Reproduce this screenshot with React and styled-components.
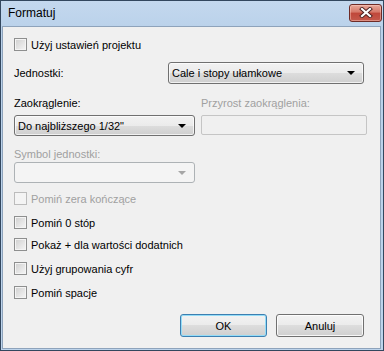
import React from 'react';
import styled, { createGlobalStyle, css } from 'styled-components';

const GlobalStyle = createGlobalStyle`
  html, body {
    margin: 0;
    padding: 0;
    background: #ffffff;
  }
  body {
    font-family: "Liberation Sans", Arial, sans-serif;
    font-size: 11px;
  }
`;

const Window = styled.div`
  box-sizing: border-box;
  width: 384px;
  height: 351px;
  display: flex;
  flex-direction: column;
  border: 1px solid #33475e;
  padding: 0 2px 1px 1px;
  background: linear-gradient(#c4d8ee, #b9d1ea 30px, #bdd4ec);
`;

const TitleBar = styled.div`
  height: 25px;
  display: flex;
  align-items: center;
  justify-content: space-between;
  padding-left: 6px;
  flex-shrink: 0;
`;

const Title = styled.span`
  font-size: 12px;
  color: #000;
  margin-top: -2px;
`;

const CloseButton = styled.div`
  box-sizing: border-box;
  width: 33px;
  height: 18px;
  margin-top: -2px;
  margin-right: -1px;
  border: 1px solid #6e2b26;
  border-radius: 3px;
  background: linear-gradient(#e7a89a 0%, #d57768 45%, #c0473a 50%, #c4594c 100%);
  box-shadow: inset 0 0 0 1px rgba(255, 210, 200, 0.45);
  display: flex;
  align-items: center;
  justify-content: center;
`;

const Content = styled.div`
  flex: 1;
  border: 1px solid #8ea3bb;
  background: #f0f0f0;
  padding: 11px 16px 11px 11px;
  display: flex;
  flex-direction: column;
`;

const CheckRow = styled.label`
  display: flex;
  align-items: center;
  height: 13px;
  gap: 4px;
  margin-top: ${(p) => p.$top || 0}px;
  color: ${(p) => (p.$disabled ? '#a0a0a0' : '#000')};
`;

const Box = styled.span`
  box-sizing: border-box;
  width: 13px;
  height: 13px;
  border: 1px solid ${(p) => (p.$disabled ? '#bcbcbc' : '#8e8f8f')};
  background: ${(p) =>
    p.$disabled
      ? '#f4f4f4'
      : 'linear-gradient(135deg, #cfcfcf, #f6f6f6)'};
  box-shadow: inset 0 0 0 1px #f4f4f4;
  flex-shrink: 0;
`;

const UnitsRow = styled.div`
  display: flex;
  align-items: center;
  justify-content: space-between;
  margin-top: 11px;
`;

const Label = styled.div`
  color: ${(p) => (p.$disabled ? '#a0a0a0' : '#000')};
  height: 13px;
  line-height: 13px;
`;

const Grid = styled.div`
  display: grid;
  grid-template-columns: 181px 166px;
  column-gap: 6px;
  margin-top: 13px;
`;

const Field = styled.div`
  display: flex;
  flex-direction: column;
  gap: ${(p) => p.$gap}px;
`;

const Combo = styled.div`
  box-sizing: border-box;
  width: ${(p) => p.$w}px;
  height: ${(p) => p.$h || 21}px;
  border-radius: 3px;
  display: flex;
  align-items: center;
  justify-content: space-between;
  padding: 0 8px 0 3px;
  ${(p) =>
    p.$disabled
      ? css`
          border: 1px solid #adb2b5;
          background: #f4f4f4;
        `
      : css`
          border: 1px solid #707070;
          background: linear-gradient(#f2f2f2 0%, #ebebeb 50%, #dddddd 50%, #cfcfcf 100%);
          box-shadow: inset 0 0 0 1px rgba(255, 255, 255, 0.7);
        `}
`;

const Arrow = styled.span`
  width: 0;
  height: 0;
  border-left: 4px solid transparent;
  border-right: 4px solid transparent;
  border-top: 4px solid ${(p) => (p.$disabled ? '#a6a6a6' : '#000')};
`;

const TextBox = styled.div`
  box-sizing: border-box;
  width: 166px;
  height: 20px;
  border: 1px solid #c5c5c5;
  border-radius: 2px;
  background: #f0f0f0;
`;

const SymbolField = styled(Field)`
  margin-top: 12px;
  width: 181px;
`;

const Buttons = styled.div`
  margin-top: auto;
  display: flex;
  justify-content: flex-end;
  gap: 9px;
`;

const Button = styled.div`
  box-sizing: border-box;
  width: ${(p) => p.$w}px;
  height: 23px;
  border-radius: 3px;
  display: flex;
  align-items: center;
  justify-content: center;
  color: #000;
  background: linear-gradient(#f2f2f2 0%, #ebebeb 50%, #dddddd 50%, #cfcfcf 100%);
  border: 1px solid ${(p) => (p.$default ? '#3c7fb1' : '#707070')};
  box-shadow: inset 0 0 0 1px ${(p) => (p.$default ? '#94dcf7' : 'rgba(255,255,255,0.8)')};
`;

function Check({ label, top, disabled }) {
  return (
    <CheckRow $top={top} $disabled={disabled}>
      <Box $disabled={disabled} />
      {label}
    </CheckRow>
  );
}

export default function App() {
  return (
    <>
      <GlobalStyle />
      <Window>
        <TitleBar>
          <Title>Formatuj</Title>
          <CloseButton>
            <svg width="14" height="11" viewBox="0 0 14 11">
              <path d="M3 2 L11 9 M11 2 L3 9" stroke="#4b2020" strokeWidth="4" strokeLinecap="square" />
              <path d="M3 2 L11 9 M11 2 L3 9" stroke="#ffffff" strokeWidth="2.2" strokeLinecap="square" />
            </svg>
          </CloseButton>
        </TitleBar>
        <Content>
          <Check label="Użyj ustawień projektu" />
          <UnitsRow>
            <Label>Jednostki:</Label>
            <Combo $w={196} $h={22}>
              <span>Cale i stopy ułamkowe</span>
              <Arrow />
            </Combo>
          </UnitsRow>
          <Grid>
            <Field $gap={5}>
              <Label>Zaokrąglenie:</Label>
              <Combo $w={181}>
                <span>Do najbliższego 1/32"</span>
                <Arrow />
              </Combo>
            </Field>
            <Field $gap={5}>
              <Label $disabled>Przyrost zaokrąglenia:</Label>
              <TextBox />
            </Field>
          </Grid>
          <SymbolField $gap={1}>
            <Label $disabled>Symbol jednostki:</Label>
            <Combo $w={181} $disabled>
              <span />
              <Arrow $disabled />
            </Combo>
          </SymbolField>
          <Check label="Pomiń zera kończące" top={9} disabled />
          <Check label="Pomiń 0 stóp" top={11} />
          <Check label="Pokaż + dla wartości dodatnich" top={9} />
          <Check label="Użyj grupowania cyfr" top={11} />
          <Check label="Pomiń spacje" top={11} />
          <Buttons>
            <Button $w={87} $default>OK</Button>
            <Button $w={88}>Anuluj</Button>
          </Buttons>
        </Content>
      </Window>
    </>
  );
}
